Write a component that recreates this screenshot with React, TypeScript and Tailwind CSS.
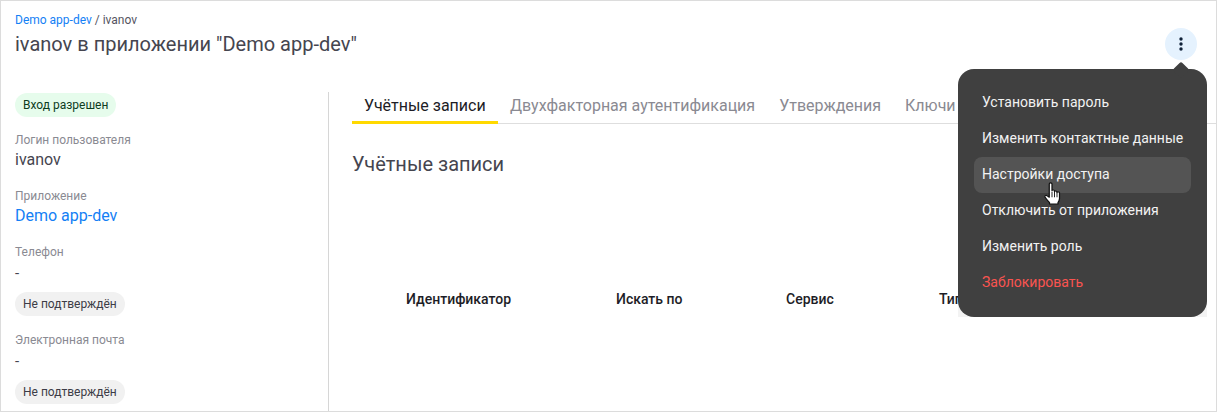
import React from "react";

const Chip = ({ children, green }: { children: React.ReactNode; green?: boolean }) => (
  <span className={`inline-flex h-6 items-center rounded-full px-2 text-xs leading-6 ${green ? "bg-[#e6fcec] text-[#0e3d1f]" : "bg-[#f1f1f1] text-[#3c3c46]"}`}>
    {children}
  </span>
);

const Label = ({ children }: { children: React.ReactNode }) => (
  <div className="text-xs leading-4 text-[#8a8a92]">{children}</div>
);

const Hand = () => (
  <svg width="20" height="24" viewBox="0 0 16 22" preserveAspectRatio="none" className="absolute left-[1042px] top-[181px]">
    <path
      d="M5 1.8c0-1.3 2.2-1.3 2.2 0V8c0-1 2-1 2 .1V9c0-1 2-1 2 .1v.6c0-1 2-.9 2 .2v5.3c0 1.6-.5 2.6-1.2 3.6v1.4H5.2v-1.4c-1.2-1.5-2.6-3-3.6-5-.6-1.2.8-2 1.8-1.1L5 14V1.8z"
      fill="#fff"
      stroke="#111"
      strokeWidth="1"
      strokeLinejoin="round"
    />
    <path d="M7.2 9v5M9.2 9v5M11.2 9.5V14" stroke="#111" strokeWidth="0.8" fill="none" />
  </svg>
);

export default function App() {
  const items = ["Установить пароль", "Изменить контактные данные", "Настройки доступа", "Отключить от приложения", "Изменить роль", "Заблокировать"];
  return (
    <div className="relative h-[412px] w-[1217px] overflow-hidden border border-[#dcdcdc] bg-white font-['Roboto',sans-serif]">
      <div className="flex items-start justify-between pl-[14px] pr-[19px] pt-[12px]">
        <div>
          <div className="text-xs leading-[14px]">
            <span className="text-[#1480f5]">Demo app-dev</span>
            <span className="text-[#55555f]"> / ivanov</span>
          </div>
          <h1 className="mt-[3px] text-xl leading-[28px] text-[#45454f]">ivanov в приложении "Demo app-dev"</h1>
        </div>
        <button className="mt-[15px] flex h-8 w-8 items-center justify-center rounded-full bg-[#e5f2fe]">
          <svg width="4" height="14" viewBox="0 0 4 14" fill="#0f2138">
            <circle cx="2" cy="2" r="1.7" />
            <circle cx="2" cy="7" r="1.7" />
            <circle cx="2" cy="12" r="1.7" />
          </svg>
        </button>
      </div>

      <div className="mt-[32px] flex">
        <aside className="h-[320px] w-[328px] shrink-0 border-r border-[#d6d6d6] pl-[14px]">
          <Chip green>Вход разрешен</Chip>
          <div className="mt-[15px]"><Label>Логин пользователя</Label></div>
          <div className="mt-[3px] text-base leading-[18px] text-[#45454f]">ivanov</div>
          <div className="mt-[19px]"><Label>Приложение</Label></div>
          <div className="mt-[2px] text-base leading-[20px] text-[#1480f5]">Demo app-dev</div>
          <div className="mt-[18px]"><Label>Телефон</Label></div>
          <div className="mt-[3px] text-[15px] leading-[20px] text-[#45454f]">-</div>
          <div className="mt-[9px] flex"><Chip>Не подтверждён</Chip></div>
          <div className="mt-[16px]"><Label>Электронная почта</Label></div>
          <div className="mt-[3px] text-[15px] leading-[20px] text-[#45454f]">-</div>
          <div className="mt-[9px] flex"><Chip>Не подтверждён</Chip></div>
        </aside>

        <main className="min-w-0 flex-1 pl-[23px]">
          <div className="flex h-[32px] items-start border-b border-[#dedede] text-base leading-[28px]">
            <div className="h-[32px] w-[146px] border-b-[3px] border-[#ffd900] pl-3 text-[#1d1d26]">Учётные записи</div>
            <div className="ml-3 whitespace-nowrap text-[#8a8a92]">Двухфакторная аутентификация</div>
            <div className="ml-6 whitespace-nowrap text-[#8a8a92]">Утверждения</div>
            <div className="ml-6 whitespace-nowrap text-[#8a8a92]">Ключи</div>
          </div>
          <h2 className="mt-[26px] text-xl leading-[28px] text-[#45454f]">Учётные записи</h2>
          <div className="mt-[111px] flex text-sm font-medium leading-5 text-[#1d1d26]">
            <div className="ml-[54px] w-[210px]">Идентификатор</div>
            <div className="w-[170px]">Искать по</div>
            <div className="w-[153px]">Сервис</div>
            <div>Тип</div>
          </div>
        </main>
      </div>

      <div className="absolute left-[957px] top-[68px] w-[249px] rounded-t-2xl bg-[#f3f3f3]">
        <div className="rounded-2xl bg-[#404040] p-4">
          <div className="absolute left-[217px] top-[-5px] h-3 w-3 rotate-45 rounded-[2px] bg-[#404040]" />
          {items.map((t, i) => (
            <div
              key={t}
              className={`flex h-9 items-center whitespace-nowrap rounded-lg px-2 pb-[2px] text-sm font-normal ${i === 2 ? "bg-[#545454]" : ""} ${i === 5 ? "text-[#fa5450]" : "text-[#f2f2f2]"}`}
            >
              {t}
            </div>
          ))}
        </div>
      </div>
      <Hand />
    </div>
  );
}
